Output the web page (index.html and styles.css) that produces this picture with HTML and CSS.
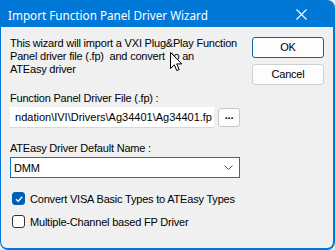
FILE: index.html
```html
<!DOCTYPE html>
<html lang="en">
<head>
<meta charset="UTF-8">
<title>Import Function Panel Driver Wizard</title>
<link rel="stylesheet" href="styles.css">
</head>
<body>
<div class="window">
    <div class="titlebar">
        <span class="title">Import Function Panel Driver Wizard</span>
        <svg class="close" width="11" height="11" viewBox="0 0 11 11"><path d="M0.5 0.5L10.5 10.5M10.5 0.5L0.5 10.5" stroke="#fff" stroke-width="1.1" fill="none"/></svg>
    </div>
    <div class="client">
        <div class="main">
            <p class="intro">This wizard will import a VXI Plug&amp;Play Function<br>Panel driver file (.fp)&nbsp; and convert&nbsp; to an<br>ATEasy driver</p>
            <label class="field-label">Function Panel Driver File (.fp) :</label>
            <div class="file-row">
                <div class="textbox"><span>ndation\IVI\Drivers\Ag34401\Ag34401.fp</span></div>
                <div class="browse">...</div>
            </div>
            <label class="field-label">ATEasy Driver Default Name :</label>
            <div class="combo">
                <span>DMM</span>
                <svg width="9" height="6" viewBox="0 0 9 6"><path d="M0.5 0.5L4.5 4.5L8.5 0.5" stroke="#555" fill="none"/></svg>
            </div>
            <div class="check-row">
                <span class="check checked"><svg width="10" height="10" viewBox="0 0 10 10"><path d="M2 5.2L4.2 7.3L8.2 2.8" stroke="#fff" stroke-width="1.3" fill="none"/></svg></span>
                <span>Convert VISA Basic Types to ATEasy Types</span>
            </div>
            <div class="check-row">
                <span class="check"></span>
                <span>Multiple-Channel based FP Driver</span>
            </div>
        </div>
        <div class="buttons">
            <div class="btn default">OK</div>
            <div class="btn">Cancel</div>
        </div>
    </div>
    <svg class="cursor" width="13" height="20" viewBox="0 0 13 20"><path d="M0.5 0.5V16.5L4.3 12.8L6.8 18.6L9.2 17.6L6.7 11.9H11.8Z" fill="#fff" stroke="#000" stroke-width="1"/></svg>
</div>
</body>
</html>
```

FILE: styles.css
```css
body {
    margin: 0;
    padding: 0;
    background: #f0f0f0;
    font-family: "Liberation Sans", Arial, sans-serif;
    font-size: 11px;
    letter-spacing: -0.2px;
    color: #000;
}
.window {
    position: relative;
    width: 335px;
    height: 250px;
    background: #0078d7;
    border-radius: 0 8px 8px 8px;
    display: flex;
    flex-direction: column;
    overflow: hidden;
}
.titlebar {
    height: 27px;
    display: flex;
    align-items: center;
    justify-content: space-between;
    padding: 0 28px 0 8px;
    color: #fff;
}
.title {
    font-family: "Noto Sans", "Open Sans", sans-serif;
    font-size: 11.7px;
    letter-spacing: 0;
    margin-top: 2px;
}
.close {
    margin-top: 2px;
}
.client {
    flex: 1;
    margin: 0 2px 2px 1px;
    background: #f0f0f0;
    border-radius: 0 0 6px 6px;
    display: flex;
    padding: 9px 10px 0 9px;
}
.main {
    width: 231px;
    white-space: nowrap;
}
.intro {
    margin: 1px 0 16px 0;
    line-height: 13px;
}
.field-label {
    display: block;
    line-height: 13px;
    margin-bottom: 2px;
}
.file-row {
    display: flex;
    align-items: center;
    gap: 4px;
    margin-bottom: 14px;
}
.textbox {
    width: 202px;
    height: 20px;
    display: flex;
    align-items: center;
    justify-content: flex-end;
    padding-right: 2px;
    background: #fff;
    border-bottom: 1px solid #d8d8d8;
    overflow: hidden;
    letter-spacing: 0;
}
.browse {
    width: 20px;
    height: 17px;
    border: 1px solid #c8c8c8;
    border-radius: 3px;
    background: #fdfdfd;
    font-weight: bold;
    text-align: center;
    line-height: 13px;
}
.combo {
    height: 19px;
    border: 1px solid #0078d7;
    background: #fff;
    display: flex;
    align-items: center;
    justify-content: space-between;
    padding: 0 6px 0 3px;
    margin-bottom: 14px;
}
.check-row {
    display: flex;
    align-items: center;
    gap: 5px;
    height: 13px;
    margin: 0 0 10px 2px;
}
.check {
    width: 11px;
    height: 11px;
    border: 1px solid #333;
    border-radius: 3px;
    background: #fff;
    display: flex;
    align-items: center;
    justify-content: center;
}
.check.checked {
    background: #005fb8;
    border-color: #005fb8;
}
.buttons {
    margin-left: 12px;
    display: flex;
    flex-direction: column;
    gap: 6px;
    padding-top: 1px;
}
.btn {
    width: 70px;
    height: 19px;
    line-height: 19px;
    text-align: center;
    border: 1px solid #d0d0d0;
    border-radius: 3px;
    background: #fdfdfd;
}
.btn.default {
    border-color: #0067c0;
}
.cursor {
    position: absolute;
    left: 170px;
    top: 52px;
}
```
